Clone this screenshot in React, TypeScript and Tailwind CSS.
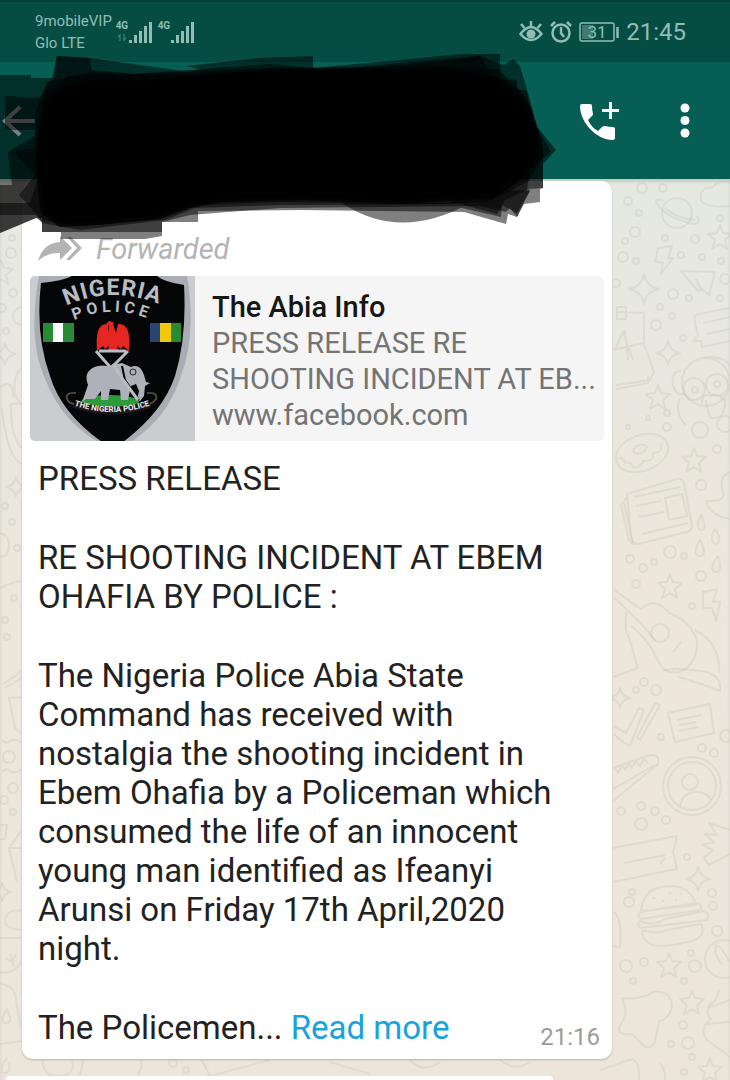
import React from "react";

const BODY = "m-0 text-[33px] leading-[39px]";

function SignalBars({ arrows = false }: { arrows?: boolean }) {
  return (
    <div className="flex items-start">
      <div className="flex w-3 flex-col items-center gap-[3px]">
        <span className="text-[10px] font-bold leading-[10px]">4G</span>
        <svg width="10" height="7" viewBox="0 0 10 7" className="opacity-40">
          {arrows && (
            <path d="M3 7V1L1 3M7 0v6l2-2" fill="none" stroke="currentColor" strokeWidth="1.4" />
          )}
        </svg>
      </div>
      <svg width="24" height="22" viewBox="0 0 24 22" stroke="currentColor" strokeWidth="3">
        <path d="M2.500 19v3M7.500 14v8M12.500 10v12M17.500 5v17M22.500 1v21" />
      </svg>
    </div>
  );
}

function StatusBar() {
  return (
    <div className="flex h-[62px] items-start justify-between border-t-2 border-[#063d36] bg-[#054d42] pl-[35px] pr-11 text-[#91bdb4]">
      <div className="flex items-start gap-1 pt-2">
        <div className="text-[15px] leading-[22px]">
          <div>9mobileVIP</div>
          <div>Glo LTE</div>
        </div>
        <div className="flex gap-[6px] pt-[11px]">
          <SignalBars arrows />
          <SignalBars />
        </div>
      </div>
      <div className="flex items-center gap-[7px] pt-4">
        <svg width="24" height="22" viewBox="0 0 24 22" fill="none" stroke="currentColor" strokeWidth="2.500">
          <path d="M1.500 13Q12-1 22.500 13Q12 25 1.500 13zM12 5V0M5.500 7L2 3M18.500 7L22 3" />
          <circle cx="12" cy="13" r="4.500" fill="currentColor" stroke="none" />
        </svg>
        <svg width="22" height="22" viewBox="0 0 22 22" fill="none" stroke="currentColor" strokeWidth="2.500">
          <circle cx="11" cy="12" r="8.500" />
          <path d="M11 6v6l3 4M1 5l4-4M21 5l-4-4" />
        </svg>
        <svg width="40" height="20" viewBox="0 0 40 20">
          <rect x="1" y="1" width="34" height="18" rx="2" fill="none" stroke="currentColor" strokeWidth="1.500" />
          <rect x="3" y="3" width="11" height="14" fill="currentColor" opacity=".4" />
          <path d="M38.500 5v11" stroke="currentColor" strokeWidth="2.500" />
          <text x="18" y="16" textAnchor="middle" fontSize="17" fill="currentColor">
            31
          </text>
        </svg>
        <span className="text-[24px] leading-[28px]">21:45</span>
      </div>
    </div>
  );
}

function AppBar() {
  return (
    <header className="flex h-[117px] items-center justify-between bg-[#065e54] pr-[30px] text-white">
      <button type="button" aria-label="Back" className="text-white">
        <svg width="36" height="36" viewBox="0 0 36 36" fill="none" stroke="currentColor" strokeWidth="4">
          <path d="M20 4L5 18l15 14M5 18h30" />
        </svg>
      </button>
      <div className="flex items-center gap-[50px]">
        <button type="button" aria-label="Add call">
          <svg width="42" height="42" viewBox="0 0 42 42" fill="currentColor">
            <path d="M4 4h8q2 0 2 2 0 4 1 8 0 1-1 2l-4 4q4 8 10 11l4-4q1-1 3-1 4 1 8 1 2 0 2 2v9q0 2-2 2C18 40 2 22 2 6q0-2 2-2z" />
            <path d="M31 2h3v7h7v3h-7v7h-3v-7h-7V9h7z" />
          </svg>
        </button>
        <button type="button" aria-label="More options">
          <svg width="30" height="36" viewBox="0 0 30 36" fill="currentColor">
            <circle cx="15" cy="5" r="4.500" />
            <circle cx="15" cy="17.500" r="4.500" />
            <circle cx="15" cy="30" r="4.500" />
          </svg>
        </button>
      </div>
    </header>
  );
}

const dots = [
  [628, 201, 4], [642, 188, 5], [663, 188, 4], [639, 213, 3], [635, 232, 5], [625, 241, 3],
  [665, 238, 3], [695, 239, 4], [720, 218, 3], [623, 257, 5], [636, 261, 3], [681, 255, 3],
  [702, 257, 3], [721, 261, 3], [616, 283, 4], [673, 294, 5], [689, 298, 3], [720, 298, 3],
  [660, 307, 3], [672, 316, 3], [656, 325, 5], [683, 338, 3], [725, 279, 5], [667, 413, 3],
  [667, 427, 4], [648, 418, 2], [628, 427, 2], [700, 430, 8], [725, 424, 8], [717, 449, 4],
  [701, 485, 5], [670, 552, 6], [684, 556, 3], [630, 559, 4], [643, 568, 4], [654, 562, 3],
  [636, 584, 4], [701, 576, 5], [692, 606, 3], [644, 682, 4], [656, 690, 5], [636, 690, 3],
  [661, 737, 3], [702, 748, 4], [714, 753, 4], [726, 736, 6], [621, 811, 4], [641, 806, 4],
  [655, 811, 4], [641, 824, 6], [666, 820, 4], [687, 857, 3], [632, 892, 3], [629, 902, 5],
  [712, 893, 4], [713, 906, 4], [717, 931, 5], [691, 953, 3], [626, 966, 6], [644, 962, 4],
  [695, 966, 6], [633, 981, 3], [684, 981, 3], [683, 1025, 4], [671, 1044, 3], [688, 1043, 6],
  [692, 1057, 3], [684, 1072, 3], [12, 238, 3], [11, 253, 5], [13, 293, 4], [2, 308, 4],
  [6, 331, 3], [5, 506, 3], [12, 522, 3], [17, 548, 3], [14, 598, 3], [5, 620, 3], [7, 637, 3],
  [9, 757, 6], [13, 788, 5], [4, 800, 4], [13, 812, 3], [173, 1063, 4], [186, 1070, 3],
];

const stars = [
  [720, 237], [694, 460], [670, 586], [669, 965], [692, 1002], [710, 1070], [658, 397], [1, 272],
];

const sparkles = [
  [644, 289, 15], [668, 353, 12], [698, 879, 12], [620, 698, 10], [5, 354, 11], [16, 487, 10],
  [2, 892, 9],
];

// Line drawings behind the messages
function Wallpaper() {
  return (
    <svg
      className="absolute inset-0 h-full w-full"
      viewBox="0 179 730 901"
      preserveAspectRatio="xMaxYMin slice"
      fill="none"
      stroke="#c9c7b9"
      strokeOpacity=".38"
      strokeWidth="2"
      strokeLinejoin="round"
      aria-hidden="true"
    >
      {dots.map(([x, y, r]) => (
        <circle key={`${x}-${y}`} cx={x} cy={y} r={r} />
      ))}
      {stars.map(([x, y]) => (
        <path
          key={`${x}-${y}`}
          d="M0-12l3 8 9 1-7 6 2 9-7-5-8 5 3-9-7-6 9-1z"
          transform={`translate(${x} ${y})`}
        />
      ))}
      {sparkles.map(([x, y, r]) => (
        <path
          key={`${x}-${y}`}
          d="M0-1Q.15-.15 1 0Q.15.15 0 1Q-.15.15-1 0Q-.15-.15 0-1z"
          vectorEffect="non-scaling-stroke"
          transform={`translate(${x} ${y}) scale(${r})`}
        />
      ))}
      {/* planet, cloud, bolts, paper plane */}
      <circle cx="677" cy="213" r="15" />
      <path d="M663 200q-10-2-6 4 10 14 36 20 9 1 4-8M665 208q10 10 30 12" />
      <path d="M730 183q-12-4-17 4-15 1-12 13 3 8 29 6" />
      <path d="M658 248l14-2-4 12h5l-12 16 2-12h-8zM703 592l14-3-4 13h7l-4 19-4-13h-9z" />
      <path d="M681 271l34 1-6 23-9-7-4-9 6 11-4 1z" />
      {/* clapper board and speech card */}
      <path d="M616 312l28 1v31l10 28-4 8-34 5M613 350l30-7M616 389l32-6v-7M617 307h9v12h-9zM615 350l8-18 10 28M625 330l3 30" />
      <path d="M730 308l-31 6q-6 1-4 8l3 14-5 5h8l1 6 28-6M703 323l27-6M706 334l24-5" />
      {/* monkey */}
      <circle cx="706" cy="382" r="24" />
      <path d="M681 371q-10 0-8 14 3 12 12 8M686 425q-12-12-6-27M730 366q-8-12-26-8" />
      <circle cx="694" cy="389" r="11" />
      <circle cx="717" cy="385" r="11" />
      <circle cx="695" cy="390" r="3" />
      <circle cx="717" cy="384" r="3" />
      <path d="M702 404q0-12 9-8 8-4 12 4M706 400q2 20 8 18 12 0 11-20" />
      {/* doughnut */}
      <ellipse cx="642" cy="453" rx="27" ry="18" transform="rotate(-20 642 453)" />
      <ellipse cx="640" cy="449" rx="7" ry="4" transform="rotate(-20 640 449)" />
      <path d="M617 459q5-4 8 4 6-2 8 4 8 1 10-6 12 0 10-8 10 0 8-10" />
      {/* newspaper */}
      <path d="M627 494l50-15q5-1 7 4l8 42q0 6-5 7l-48 12q-7 1-8-6zM627 497l-6 8 8 36q3 4 8 2" />
      <path d="M634 497l46-10M636 506l25-5M639 517l25-5M642 534l46-11M665 498l17-4 5 22-18 4zM624 503l9 40" />
      {/* drops and fruit */}
      <path d="M701 515q-6 14 0 15 7-1 0-15zM700 540q-9 15 0 16 8-1 0-16zM715 529q-7 12 1 15 7-3-1-15zM718 556q-10 14-2 16 7 0 2-16z" />
      <path d="M730 472q-12 4-7 20 3 10-17 9 4 15 24 18" />
      {/* guitar */}
      <path d="M613 589q16 12 28 20 14-13 28 4 22 8 28 28 1 24-18 31-13 3-20-9-8-21-28-37" />
      <path d="M613 597q21 18 43 44M627 610q-4 17 2 28l9 30-25 9" />
      <circle cx="660" cy="633" r="9" />
      <path d="M673 652l8-10M679 677q24 7 41 14 2-17-19-20-29-4-38 0M695 630q25 12 24 43" />
      {/* pencils and card */}
      <path d="M613 733q8 9 17 13l14-36-5-2-13 25-13-7M640 740l20-35-5-2-18 34zM668 713l42-9 4 29-39 9zM677 720l24-5M679 725l17-3M679 731l20-4" />
      <path d="M613 768l37-13q10-1 8 9l-45 37M615 768l3 5 4-8 3 5 4-7 3 5 4-7 4 5 4-7 4 4M613 789l42-24" />
      {/* contact */}
      <circle cx="692" cy="786" r="29" />
      <circle cx="692" cy="786" r="24" />
      <circle cx="690" cy="782" r="8" />
      <path d="M680 806q3-14 16-14 11 0 15 8" />
      {/* keyboard and hand */}
      <path d="M613 848l64-12-4 16 4 17-64 13M624 863l41-8M660 864l5-6" />
      <path d="M730 830l-21-7 8 12-12-1 9 8-12 3 11 5-9 8 5 7 21-11" />
      {/* burger */}
      <path d="M641 911q2-25 30-25 20 1 25 19zM640 912l56-9q6 0 5 7l-60 9q-5-3-1-7zM640 921q12 6 25-2l40-8q5 4 2 9l-66 8q-5-2-1-7zM643 930q14 5 24 0l34-6q6 10-8 17-34 8-43 3-10-7-7-14z" />
      <path d="M653 898l2 0M662 901l2 0M669 893l2 0M675 900l2 0M680 894l2 0" />
      {/* clock and cake */}
      <circle cx="724" cy="959" r="19" />
      <path d="M715 953l1-8 5 3 9 14M715 953l7 12M719 989q-2 14-10 16-4 10 2 14-12 9-5 20l24 18M708 1008l22-8M706 1024l24-2" />
      {/* splash shape */}
      <path d="M622 998q19 2 31-6 19-2 19 15-3 12-13 14l-4 21q-3 8-11 4l-12-12q-19 2-10-12 7-7 0-24z" />
      <path d="M600 1070l32-11q8 3 7 21M660 1063q6 8 5 17M613 912q10 6 7 35l-7-1" />
      {/* left edge */}
      <path d="M22 307q-10 2-9 10 1 8 9 8M22 368q-10 8-7 25 3 10 7 12M0 388q8-8 12 0l2 10M2 408q5 50 20 56M11 408q-3-6 11-4M11 408q0 30 11 40M0 533q9 2 9 12 0 12-9 12M0 588q12-6 22-7" />
      <path d="M3 684l19-13M5 688l17-10M22 697l-13 1 6 30q4 5 7 5M2 740q4 5 8 1t12 2M2 772q4-5 8-1t12-2M0 825h7l-2 14H0M22 830l-13 18 8 34M9 848h13M22 911q-16-3-17 10 0 8 17 9M0 938h22M10 953l4 14M5 958l7 4 4-8M0 972q14 3 21-10M0 984q12 1 15 10l6 34M7 1009q-8 12-2 14 9 1 2-14zM0 1044l22-3M7 1058q-8 10-4 15 8 1 6-10" />
      <path d="M42 1060q2 18 18 16 16-1 12-16M80 1075l3-14M140 1060q4 8-2 14M202 1060l8 16 60-16M330 1062l40 12M410 1060q12 14 30 2M500 1060q15 12 30 2" />
    </svg>
  );
}

function PoliceBadge() {
  return (
    <svg className="h-full w-[165px] shrink-0 bg-[#cbccd0]" viewBox="0 0 165 165" role="img" aria-label="Nigeria Police badge">
      <defs>
        <path id="arc-name" d="M26 35Q81 4 140 33" />
        <path id="arc-police" d="M36 48Q82 24 128 47" />
        <path id="arc-ribbon" d="M40 128Q82 144 124 128" />
      </defs>
      <path d="M9 0Q-3 65 16 105 32 145 68 166h33Q137 142 150 103 167 60 157 0z" fill="#a9acb3" />
      <path d="M11 7Q33 5 42 0h85q7 6 27 9 3 52-9 91-12 36-52 66H72Q31 137 20 100 5 58 11 7z" fill="#050608" />
      <g fill="#b9bcc2" fontWeight="bold" textAnchor="middle">
        <text fontSize="23" letterSpacing="1">
          <textPath href="#arc-name" startOffset="50%">NIGERIA</textPath>
        </text>
        <text fontSize="16" letterSpacing="4">
          <textPath href="#arc-police" startOffset="50%">POLICE</textPath>
        </text>
      </g>
      <path d="M13 47h10v19H13zM33 47h11v19H33z" fill="#278b35" />
      <path d="M23 47h10v19H23z" fill="#fff" />
      <path d="M120 47h10v19h-10z" fill="#284572" />
      <path d="M130 47h11v19h-11z" fill="#f0c80c" />
      <path d="M141 47h10v19h-10z" fill="#278b35" />
      <path
        d="M78 48q-7-1-10 7-2 7-1 20l6-5 2 3 4-3-1 4h10l-1-4 4 3 2-3 6 5q1-13-1-20-3-8-10-7l-2 9-2-6-1-5-4-1-3 3 3 1-1 8z"
        fill="#e52622"
      />
      <ellipse cx="80" cy="126" rx="29" ry="7" fill="#2d9a3c" />
      <path d="M66 75l15 17 17-17M69 75h27" fill="none" stroke="#b9bcc2" strokeWidth="3" />
      <path d="M58 96q7-8 19-6l15-3 9 4q9-4 13 8l2 7 4 1-5 3-1 10-4 5-3-1 2-9-3-7-5 2-3 14h-7l-1-10-10-1-2 11h-7v-9l-6 8h-9l-4 3 6-17q-3-8 0-13z" fill="#aeb1b7" />
      <path d="M92 90l3 14 14 20" fill="none" stroke="#050608" strokeWidth="2" />
      <path d="M83 88l8 13 17 23" fill="none" stroke="#b9bcc2" strokeWidth="3" />
      <circle cx="103" cy="96" r="3" fill="none" stroke="#222" />
      <path d="M46 117q-11-1-9 6 3 6 11 5M117 117q11-1 9 6-4 6-12 5" fill="none" stroke="#4c483c" strokeWidth="2" />
      <path d="M44 128Q82 141 120 128" fill="none" stroke="#18181a" strokeWidth="8" />
      <text fontSize="8" fontWeight="bold" fill="#eee" textAnchor="middle">
        <textPath href="#arc-ribbon" startOffset="50%">THE NIGERIA POLICE</textPath>
      </text>
    </svg>
  );
}

// Marker strokes hiding the chat name
function Redaction() {
  return (
    <svg
      className="pointer-events-none absolute left-0 top-[50px] h-[200px] w-[560px]"
      viewBox="0 50 560 200"
      aria-hidden="true"
    >
      <g fill="#000" fillOpacity=".5">
        <path d="M0 75H31V78H54L57 56 89 58 190 72 200 69 186 66 260 58 313 56V68L400 60 460 54H500V64L504 65 513 59 520 66 530 100 537 127 556 150 543 164V188L540 189V202L524 204 517 217 508 214 506 224 464 212 300 210 198 211V222H162V236L145 239H61V232H42V222L36 218 0 233z" />
        <path d="M52 78L57 56 89 58 92 70 134 74 190 70 270 64 330 70 400 63 480 56 500 64V78L517 80V90H526L534 120 537 127 543 145V188L528 189 530 190 517 217 510 208 506 212 480 206 280 208 190 215 162 222V232H42V218L36 218 0 233V185H12L8 152 36 135V130H5V96L40 98z" />
        <path d="M47 82L90 72 134 74 190 76 280 68 370 68 455 60 480 55 492 75 518 88 530 105 538 128 551 152 530 170 527 190 505 200 497 214 460 204 280 205 195 208 165 220 80 230 42 223 36 215H0V203H30L38 178 14 152 34 148 36 110z" />
        <path d="M44 96L68 76 90 75 135 74 270 68 450 66 500 70 526 100 538 130 543 155 530 180 512 190 487 202 420 204 280 202 195 205 150 220 80 226 42 220 19 195 35 175 38 130z" />
        <path d="M342 203H470Q400 242 342 203zM463 187l67 4-13 22-15-8-1 12-52-12z" />
      </g>
      <path d="M48 98L66 86 90 80 150 80 200 74 300 70 450 69 500 78 516 94 532 112 538 136 533 165 516 184 492 198 400 204 300 200 222 202 190 208 160 219 100 225 60 227 41 214 38 190 36 155 42 118z" fill="#000" fillOpacity=".8" />
      <path d="M52 100L70 88 92 84 150 83 200 77 300 72 450 72 496 82 512 100 528 116 534 138 529 163 512 180 488 194 400 200 300 197 220 199 188 205 156 215 100 221 60 223 45 211 42 190 40 155 46 120z" fill="#000" />
    </svg>
  );
}

function LinkPreview() {
  return (
    <a href="https://www.facebook.com" className="flex h-[165px] overflow-hidden rounded-[5px] bg-[#f5f5f5]">
      <PoliceBadge />
      <div className="min-w-0 flex-1 pl-[17px] pt-[13px] text-[29px] leading-9 text-[#747474]">
        <div className="font-medium text-[#161616]">The Abia Info</div>
        <div>PRESS RELEASE RE</div>
        <div className="whitespace-nowrap">SHOOTING INCIDENT AT EB...</div>
        <div>www.facebook.com</div>
      </div>
    </a>
  );
}

function Message() {
  return (
    <article className="relative max-w-[590px] rounded-[11px] bg-white px-2 pb-3 pt-[50px] shadow-[0_1px_2px_#b5b3a5]">
      <div className="flex items-center gap-[14px] pl-2 text-[29px] italic leading-9 text-[#b4b4b4]">
        <svg width="44" height="26" viewBox="0 0 44 26" fill="currentColor">
          <path d="M0 25Q5 7 22 6V0l12 12-12 12v-7Q10 16 0 25z" />
          <path d="M29 1h4l11 11-12 12h-4l11-12z" />
        </svg>
        Forwarded
      </div>
      <div className="pt-[9px]">
        <LinkPreview />
      </div>
      <div className="flex flex-col gap-10 px-2 pt-[18px] text-[#222]">
        <p className={BODY}>PRESS RELEASE</p>
        <p className={BODY}>
          RE SHOOTING INCIDENT AT EBEM
          <br />
          OHAFIA BY POLICE :
        </p>
        <p className={BODY}>
          The Nigeria Police Abia State
          <br />
          Command has received with
          <br />
          nostalgia the shooting incident in
          <br />
          Ebem Ohafia by a Policeman which
          <br />
          consumed the life of an innocent
          <br />
          young man identified as Ifeanyi
          <br />
          Arunsi on Friday 17th April,2020
          <br />
          night.
        </p>
        <div className="flex items-end justify-between">
          <p className={BODY}>
            The Policemen...{" "}
            <button type="button" className="text-[#18a3dc]">
              Read more
            </button>
          </p>
          <time className="-mb-1 -mr-1 text-[24px] leading-7 text-[#9c9c9c]">21:16</time>
        </div>
      </div>
    </article>
  );
}

export default function App() {
  return (
    <div className="relative flex min-h-screen flex-col overflow-hidden font-['Roboto',sans-serif]">
      <StatusBar />
      <AppBar />
      <main className="relative flex flex-1 flex-col bg-linear-to-b from-[#e5e9e2] via-[#ece6db] via-40% to-[#ece6da] pl-[22px] pr-5 pt-[2px] shadow-[inset_0_3px_3px_#c5cbc4]">
        <Wallpaper />
        <Message />
        <div className="relative -ml-4 mt-[17px] min-h-[3px] max-w-[547px] flex-1 rounded-t-[4px] bg-white" />
      </main>
      <Redaction />
    </div>
  );
}
